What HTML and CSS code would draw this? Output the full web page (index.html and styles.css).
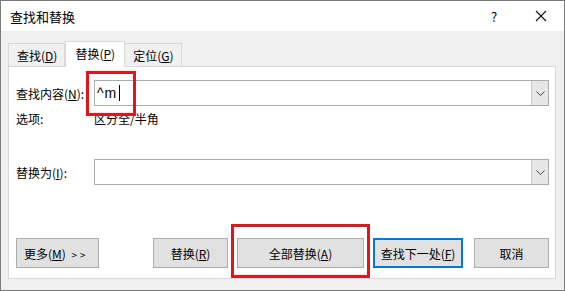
FILE: index.html
```html
<!DOCTYPE html>
<html lang="zh-CN">
<head>
    <meta charset="UTF-8">
    <title>查找和替换</title>
    <link rel="stylesheet" href="styles.css">
</head>
<body>
    <div class="window">
        <div class="titlebar">
            <span class="title">查找和替换</span>
            <span class="tb-btn help">?</span>
            <span class="tb-btn close">
                <svg width="12" height="12" viewBox="0 0 12 12"><path d="M1 1 L11 11 M11 1 L1 11" stroke="#111" stroke-width="1.1" fill="none"/></svg>
            </span>
        </div>

        <div class="dialog-body">
            <div class="tabs">
                <div class="tab">查找(<u>D</u>)</div>
                <div class="tab active">替换(<u>P</u>)</div>
                <div class="tab">定位(<u>G</u>)</div>
            </div>

            <div class="panel">
                <div class="row find-row">
                    <label class="field-label">查找内容(<u>N</u>):</label>
                    <div class="combo">
                        <span class="combo-text">^m<span class="caret"></span></span>
                        <span class="combo-drop">
                            <svg width="9" height="5" viewBox="0 0 9 5"><path d="M0.5 0.5 L4.5 4.5 L8.5 0.5" stroke="#444" stroke-width="1" fill="none"/></svg>
                        </span>
                    </div>
                </div>

                <div class="row options-row">
                    <span class="field-label">选项:</span>
                    <span class="option-value">区分全/半角</span>
                </div>

                <div class="row replace-row">
                    <label class="field-label">替换为(<u>I</u>):</label>
                    <div class="combo">
                        <span class="combo-text"></span>
                        <span class="combo-drop">
                            <svg width="9" height="5" viewBox="0 0 9 5"><path d="M0.5 0.5 L4.5 4.5 L8.5 0.5" stroke="#444" stroke-width="1" fill="none"/></svg>
                        </span>
                    </div>
                </div>

                <div class="row button-row">
                    <button class="btn btn-more">更多(<u>M</u>) <span class="arrows">&gt;&gt;</span></button>
                    <div class="btn-group">
                        <button class="btn btn-replace">替换(<u>R</u>)</button>
                        <button class="btn btn-all">全部替换(<u>A</u>)</button>
                        <button class="btn btn-next">查找下一处(<u>F</u>)</button>
                        <button class="btn btn-cancel">取消</button>
                    </div>
                </div>

                <!-- red annotation boxes -->
                <div class="mark mark-find"></div>
                <div class="mark mark-all"></div>
            </div>
        </div>
    </div>
</body>
</html>
```

FILE: styles.css
```css
* {
    margin: 0;
    padding: 0;
    box-sizing: border-box;
}

body {
    font-family: "Noto Sans CJK SC", "Noto Sans", sans-serif;
    font-size: 12px;
    color: #000;
    background: #fff;
}

u {
    text-decoration: underline;
    text-underline-offset: 1px;
}

.window {
    width: 565px;
    height: 291px;
    border: 1px solid #7a7a7a;
    display: flex;
    flex-direction: column;
    background: #f0f0f0;
}

/* Title bar */
.titlebar {
    height: 30px;
    background: #fff;
    display: flex;
    align-items: center;
    padding-left: 9px;
}

.title {
    font-size: 13px;
    flex: 1;
}

.tb-btn {
    display: flex;
    align-items: center;
    justify-content: center;
}

.help {
    width: 12px;
    font-size: 13px;
    margin-right: 35px;
}

.close {
    width: 12px;
    margin-right: 17px;
}

/* Body */
.dialog-body {
    flex: 1;
    padding: 9px 8px 11px 7px;
    display: flex;
    flex-direction: column;
}

.tabs {
    display: flex;
    align-items: flex-end;
    height: 26px;
}

.tab {
    height: 23px;
    padding: 1px 7px 0 8px;
    border: 1px solid #d9d9d9;
    border-bottom: none;
    background: #f0f0f0;
    display: flex;
    align-items: center;
    line-height: 1;
}

.tab + .tab {
    border-left: none;
}

.tab.active {
    height: 26px;
    background: #fff;
    border-left: 1px solid #d9d9d9;
    border-right: 1px solid #d9d9d9;
    margin-bottom: -1px;
    position: relative;
    z-index: 1;
    padding: 0 9px 2px 9px;
}

.tab.active + .tab {
    border-left: none;
}

.panel {
    flex: 1;
    background: #fff;
    border: 1px solid #d9d9d9;
    position: relative;
    padding: 13px 6px 0 7px;
    display: flex;
    flex-direction: column;
}

.row {
    display: flex;
    align-items: center;
}

.field-label {
    width: 78px;
    flex-shrink: 0;
}

.find-row {
    height: 26px;
}

.options-row {
    height: 16px;
    margin-top: 4px;
}

.replace-row {
    height: 26px;
    margin-top: 33px;
}

.combo {
    flex: 1;
    height: 26px;
    border: 1px solid #acacac;
    display: flex;
    align-items: stretch;
}

.combo-text {
    flex: 1;
    display: flex;
    align-items: center;
    padding-left: 2px;
    font-family: "Liberation Sans", sans-serif;
    font-size: 14px;
    letter-spacing: 1px;
}

.caret {
    display: inline-block;
    width: 1px;
    height: 16px;
    background: #000;
    margin-left: 2px;
}

.combo-drop {
    width: 17px;
    background: #e6e6e6;
    border-left: 1px solid #c8c8c8;
    display: flex;
    align-items: center;
    justify-content: center;
}

/* Buttons */
.button-row {
    margin-top: 53px;
    height: 30px;
}

.btn-group {
    margin-left: auto;
    display: flex;
    gap: 9px;
}

.btn {
    height: 30px;
    font-family: inherit;
    font-size: 12px;
    background: #e1e1e1;
    border: 1px solid #adadad;
    color: #000;
}

.btn-more {
    width: 83px;
    text-align: left;
    padding-left: 7px;
}

.arrows {
    font-size: 10px;
    letter-spacing: 3px;
    margin-left: 3px;
}

.btn-replace {
    width: 75px;
}

.btn-all {
    width: 127px;
}

.btn-next {
    width: 90px;
    border: 2px solid #0078d7;
}

.btn-cancel {
    width: 75px;
    margin-left: 2px;
}

/* Red annotation boxes */
.mark {
    position: absolute;
    border: 3px solid #e0161a;
}

.mark-find {
    left: 77px;
    top: 4px;
    width: 50px;
    height: 45px;
}

.mark-all {
    left: 222px;
    top: 157px;
    width: 139px;
    height: 54px;
}
```
